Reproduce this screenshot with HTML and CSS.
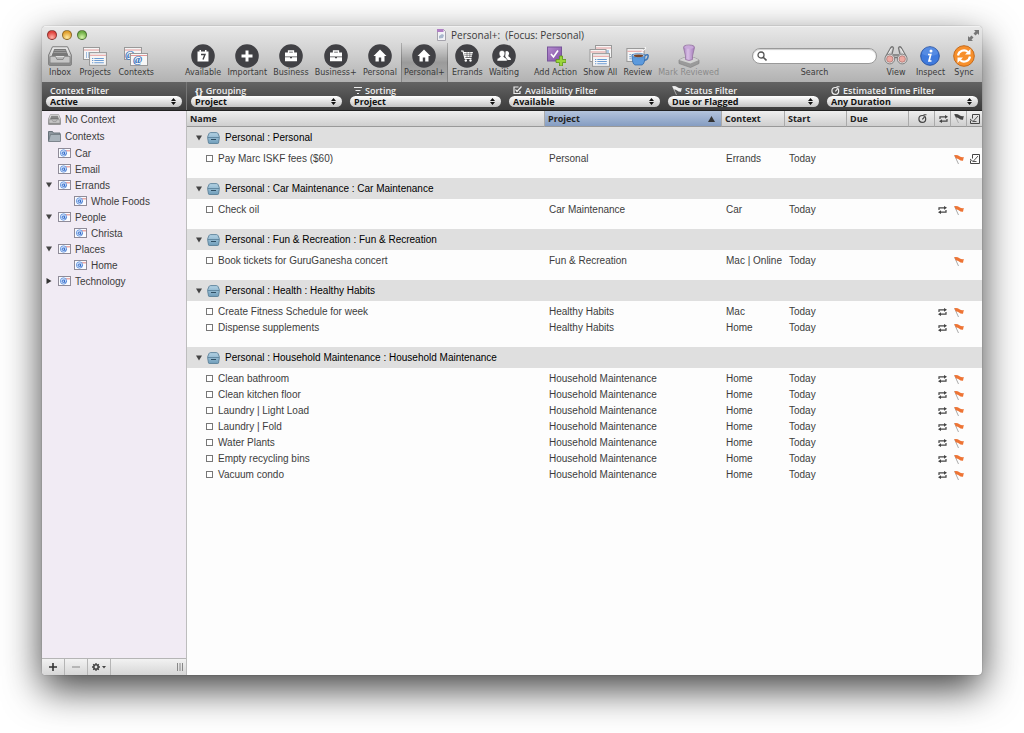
FILE: index.html
```html
<!DOCTYPE html>
<html lang="en">
<head>
    <meta charset="UTF-8">
    <meta name="viewport" content="width=device-width, initial-scale=1.0">
    <title>Personal+: (Focus: Personal)</title>
    <link rel="stylesheet" href="styles.css">
</head>
<body>

<!-- shared icons -->
<svg class="defs" aria-hidden="true">
    <defs>
        <linearGradient id="metal" x1="0" y1="0" x2="0" y2="1">
            <stop offset="0" stop-color="#f4f4f4"/><stop offset="1" stop-color="#8e8e8e"/>
        </linearGradient>
        <linearGradient id="blueBox" x1="0" y1="0" x2="0" y2="1">
            <stop offset="0" stop-color="#b4d3e5"/><stop offset="1" stop-color="#6f9dba"/>
        </linearGradient>
        <linearGradient id="purple" x1="0" y1="0" x2="1" y2="1">
            <stop offset="0" stop-color="#b58ccf"/><stop offset="1" stop-color="#7f4fa3"/>
        </linearGradient>
        <linearGradient id="stamp">
            <stop offset="0" stop-color="#a680bd"/><stop offset=".4" stop-color="#d9bfe6"/><stop offset="1" stop-color="#a27ab9"/>
        </linearGradient>
    </defs>
    <symbol id="tray" viewBox="0 0 24 20">
        <path d="M4.500 .8h15L23.300 9v9.500q0 .8-.8.8h-21q-.8 0-.8-.8V9z" fill="url(#metal)" stroke="#777"/>
        <path d="M6 2.500h12l3.300 8H2.700z" fill="#777" stroke="#eee" stroke-width=".8"/>
        <path d="M6.500 4.500h11M5.500 6.500h13" stroke="#999"/>
        <path d="M2 10.500h5.500l1.500 3h6l1.500-3H22V17H2z" fill="#c6c6c6" stroke="#777" stroke-width=".7"/>
        <path d="M2 17.800h20" stroke="#888"/>
    </symbol>
    <symbol id="card" viewBox="0 0 17 13">
        <rect x=".5" y=".5" width="16" height="12" fill="#f6f6f6" stroke="#999"/>
        <path d="M1 3h15" stroke="#e59a9a"/>
        <path d="M3 6h1M3 8h1M3 10h1" stroke="#4d83c4"/>
        <path d="M5 6h9M5 8h9M5 10h9" stroke="#6c9bd2"/>
    </symbol>
    <symbol id="at" viewBox="0 0 13 10">
        <rect x=".5" y=".5" width="12" height="9" fill="#fafbff" stroke="#8f8b98"/>
        <path d="M8 2h4v1.500H8z" fill="#e9aba8"/>
        <circle cx="5.500" cy="5" r="3.200" fill="#d5e4fa" stroke="#5c8fdc" stroke-width=".8"/>
        <circle cx="5.300" cy="5.200" r="1.200" fill="none" stroke="#2b66c8" stroke-width=".9"/>
        <path d="M6.800 3.500L6.400 6.300Q7.500 7 8.300 5.400" fill="none" stroke="#2b66c8" stroke-width=".8"/>
    </symbol>
    <symbol id="box" viewBox="0 0 13 12">
        <path d="M3.500 .6h6q1 0 1.500 1l1.300 3v1.600L11.500 11q-.2.500-.8.500H2.300q-.6 0-.8-.5L.7 6.200V4.600L2 1.600q.5-1 1.500-1z" fill="url(#blueBox)" stroke="#5a8098" stroke-width=".9"/>
        <path d="M1 5.500h11" stroke="#557c95" stroke-width=".8"/>
        <path d="M4 7.500h5" stroke="#2f4f64"/>
    </symbol>
    <symbol id="folder" viewBox="0 0 13 12">
        <path d="M.5 1.500h4l1 1.500h6.500v8H.5z" fill="#8d979f" stroke="#68727a"/>
        <path d="M2.500 4.500h10v7h-12z" fill="#a9b3bb" stroke="#68727a" stroke-width=".7"/>
    </symbol>
    <symbol id="repeat" viewBox="0 0 9 8">
        <path d="M1 4V1.800h6M8 4v2.200H2" fill="none" stroke="currentColor" stroke-width="1.200"/>
        <path d="M6 0l3 1.800-3 2zM3 4.200L0 6.200 3 8z" fill="currentColor"/>
    </symbol>
    <symbol id="flag" viewBox="0 0 10 9">
        <path d="M.5 .3L4.500 9" stroke="#aaa"/>
        <path d="M.3 .3Q3-.4 5.500 1.200 7.500 2.500 9.800 2L9 5.800Q6.500 6 5 4.600 3.800 3.500 2 3.600z" fill="currentColor"/>
    </symbol>
    <symbol id="note" viewBox="0 0 10 10">
        <path d="M2.500 .5h7v9h-9v-3M2.500 .5v4" fill="none" stroke="currentColor"/>
        <path d="M3.500 7L8 2M3 7.500h3.500M0 5l3 2.500" fill="none" stroke="currentColor" stroke-width=".9"/>
    </symbol>
    <symbol id="timer" viewBox="0 0 9 9">
        <circle cx="4.300" cy="4.900" r="3.400" fill="none" stroke="currentColor" stroke-width="1.200"/>
        <path d="M4.300 5.300L6.500 3M5.500 .8h3" fill="none" stroke="currentColor" stroke-width="1.100"/>
    </symbol>
    <symbol id="arrows" viewBox="0 0 5 7">
        <path d="M2.500 0L5 3H0zM0 4h5L2.500 7z" fill="#111"/>
    </symbol>
    <symbol id="down" viewBox="0 0 6 6"><path d="M0 .5h6L3 5.500z" fill="#444"/></symbol>
    <symbol id="right" viewBox="0 0 6 6"><path d="M.5 0v6L5.500 3z" fill="#333"/></symbol>
    <symbol id="house" viewBox="0 0 24 24">
        <circle cx="12" cy="12" r="11.800" fill="#414145"/>
        <path d="M12 5.500l6.500 6.500h-2v5.500h-3.300v-4h-2.400v4H7.500V12h-2z" fill="#fff"/>
    </symbol>
    <symbol id="case" viewBox="0 0 24 24">
        <circle cx="12" cy="12" r="11.800" fill="#414145"/>
        <path d="M9.500 9V7h5v2" fill="none" stroke="#fff" stroke-width="1.300"/>
        <path d="M6 8.500h12v4H6zM6 13.200h5v1h2v-1h5v4H6z" fill="#fff"/>
    </symbol>
</svg>

<main class="window">
    <header class="chrome">
        <div class="titlebar">
            <div class="lights">
                <button class="light red" aria-label="Close"></button>
                <button class="light yellow" aria-label="Minimize"></button>
                <button class="light green" aria-label="Zoom"></button>
            </div>
            <h1 class="title">
                <svg width="9" height="12" viewBox="0 0 9 12"><path d="M.5 .5h6l2 2v9h-8z" fill="#f3f3f7" stroke="#a5a3ad"/><path d="M0 0h6.500v3H0z" fill="#b07fc4"/><path d="M2 9.500V7l3-2 2 1-1 3z" fill="#a9b8cd"/></svg>
                Personal+:&nbsp; (Focus: Personal)
            </h1>
            <button class="fullscreen" aria-label="Full screen">
                <svg width="11" height="11" viewBox="0 0 11 11"><path d="M6 0h5v5L9.500 3.500 7.500 5.500 5.500 3.500 7.500 1.500zM0 6l1.500 1.500L3.500 5.500l2 2-2 2L5 11H0z" fill="#777"/></svg>
            </button>
        </div>

        <div class="toolbar">
            <div class="tools tools-side">
                <button class="tool"><svg width="24" height="20"><use href="#tray"/></svg>Inbox</button>
                <button class="tool">
                    <svg width="24" height="20" viewBox="0 0 24 20"><use href="#card" width="17" height="13" y="1"/><use href="#card" x="6" y="6" width="18" height="14"/></svg>Projects
                </button>
                <button class="tool">
                    <svg width="24" height="20" viewBox="0 0 24 20">
                        <rect x=".5" y="1.500" width="17" height="12" fill="#f4f4f4" stroke="#999"/><path d="M1 4h16" stroke="#e59a9a"/>
                        <text class="at-big" x="1" y="12">@</text>
                        <rect x="6.500" y="7.500" width="17" height="12" fill="#f7f7f7" stroke="#999"/><path d="M7 9.500h16" stroke="#e59a9a"/>
                        <text class="at-big" x="9" y="17">@</text>
                    </svg>Contexts
                </button>
            </div>

            <div class="tools tools-views">
                <button class="tool">
                    <svg width="24" height="24" viewBox="0 0 24 24"><circle cx="12" cy="12" r="11.800" fill="#414145"/><path d="M6.500 7.500h2V6h1.500v1.500h4V6h1.500v1.500h2v10h-11z" fill="#fff"/><path d="M10 10.500h4l-2 5" fill="none" stroke="#414145" stroke-width="1.400"/></svg>Available
                </button>
                <button class="tool">
                    <svg width="24" height="24" viewBox="0 0 24 24"><circle cx="12" cy="12" r="11.800" fill="#414145"/><path d="M12 6.500v11M6.500 12h11" stroke="#fff" stroke-width="3"/></svg>Important
                </button>
                <button class="tool"><svg width="24" height="24"><use href="#case"/></svg>Business</button>
                <button class="tool"><svg width="24" height="24"><use href="#case"/></svg>Business+</button>
                <button class="tool"><svg width="24" height="24"><use href="#house"/></svg>Personal</button>
                <button class="tool selected"><svg width="24" height="24"><use href="#house"/></svg>Personal+</button>
                <button class="tool">
                    <svg width="24" height="24" viewBox="0 0 24 24"><circle cx="12" cy="12" r="11.800" fill="#414145"/><path d="M6 7h2l2 7.500h6.500" fill="none" stroke="#fff" stroke-width="1.200"/><path d="M8.500 8h9.500l-1.500 5.200H10z" fill="#fff"/><path d="M9 9.700h9M9.500 11.400h8M12 8v5M14.800 8v5" stroke="#414145" stroke-width=".5"/><circle cx="10.800" cy="16.500" r="1.200" fill="#fff"/><circle cx="15.500" cy="16.500" r="1.200" fill="#fff"/></svg>Errands
                </button>
                <button class="tool">
                    <svg width="24" height="24" viewBox="0 0 24 24"><circle cx="12" cy="12" r="11.800" fill="#414145"/><path d="M13.500 7.500c1.500-1.500 4 0 3.500 2.500l-.7 1.800c0 1.400 2.700 1.200 2.700 4.200h-3.500l-2.300-3.500z" fill="#fff"/><path d="M5 17c0-4 3.300-2.800 3.300-4.500-2-2.500-1.300-6 1.700-6s3.700 3.500 1.700 6c0 1.700 3.500.5 3.500 4.500z" fill="#fff" stroke="#414145" stroke-width=".5"/></svg>Waiting
                </button>
            </div>

            <div class="tools tools-actions">
                <button class="tool">
                    <svg width="20" height="20" viewBox="0 0 20 20"><rect x="1.500" y="1" width="14" height="14" fill="url(#purple)" stroke="#77549a"/><path d="M5 8l2.500 3L12 4.500" fill="none" stroke="#fff" stroke-width="1.600"/><path d="M13.500 10v3.500H10v3h3.500V20h3v-3.500H20v-3h-3.500V10z" fill="#9bd53b" stroke="#5c9616" stroke-width=".8"/></svg>Add Action
                </button>
                <button class="tool">
                    <svg width="24" height="22" viewBox="0 0 24 22"><use href="#card" x="7" width="17" height="13"/><use href="#card" y="4" x="1" width="18" height="13"/><use href="#card" x="4" y="8" width="18" height="14"/></svg>Show All
                </button>
                <button class="tool">
                    <svg width="24" height="20" viewBox="0 0 24 20"><use href="#card" y="2" width="19" height="14"/><path d="M18 10q5-3 4 1t-5 3" fill="none" stroke="#3f77b8" stroke-width="1.500"/><path d="M6 9h13q0 9-3 10H9Q6 18 6 9z" fill="#5c9add" stroke="#2e66a5" stroke-width=".7"/><ellipse cx="12.500" cy="9.500" rx="6.300" ry="2.200" fill="#b9d4f0" stroke="#3f77b8" stroke-width=".6"/><ellipse cx="12.500" cy="9.800" rx="4.800" ry="1.400" fill="#7a4428"/><path d="M16 7q-1-2 2-3t1-3" fill="none" stroke="#fff"/></svg>Review
                </button>
                <button class="tool" disabled>
                    <svg width="22" height="24" viewBox="0 0 22 24"><path d="M1 16l5-2.500h10l5 2.500v3.500L12.500 23.500 1 19.500z" fill="#9a9a9a" stroke="#858585" stroke-width=".7"/><path d="M1 16l5-2.500h10l5 2.500-8.500 3.500z" fill="#d2d2d2"/><path d="M5.500 3.500Q5.500 1 11 1t5.500 2.500L14.500 12v3.500q-3.500 2-7 0V12z" fill="url(#stamp)" stroke="#94749f" stroke-width=".8"/><ellipse cx="11" cy="3.300" rx="4.500" ry="1.500" fill="#c9a9da"/></svg>Mark Reviewed
                </button>
            </div>

            <label class="search">
                <span class="search-box">
                    <svg width="10" height="10" viewBox="0 0 10 10"><circle cx="4" cy="4" r="3" fill="none" stroke="#555" stroke-width="1.300"/><path d="M6.200 6.200L9.500 9.500" stroke="#555" stroke-width="1.600"/></svg>
                    <input type="search">
                </span>
                Search
            </label>

            <div class="tools tools-right">
                <button class="tool">
                    <svg width="24" height="20" viewBox="0 0 24 20"><path d="M1.500 11L6.500 2q2-2.500 3 0L8 8M22.500 11L17.500 2q-2-2.500-3 0L16 8M9 9h6M10 11.500h4" fill="none" stroke="#777" stroke-width="1.300"/><path d="M3.500 9.500l4-7M20.500 9.500l-4-7" stroke="#eee"/><circle cx="5.800" cy="13" r="4.900" fill="#ddd" stroke="#777" stroke-width=".9"/><circle cx="18.200" cy="13" r="4.900" fill="#ddd" stroke="#777" stroke-width=".9"/><circle cx="5.800" cy="13" r="3.200" fill="#eda9a1" stroke="#a66f6c" stroke-width=".7"/><circle cx="18.200" cy="13" r="3.200" fill="#eda9a1" stroke="#a66f6c" stroke-width=".7"/></svg>View
                </button>
                <button class="tool">
                    <svg width="20" height="20" viewBox="0 0 20 20"><circle cx="10" cy="10" r="9.300" fill="#3f7add" stroke="#2c56a4"/><path d="M2 8a8 7 0 0 1 16 0q-8 4-16 0z" fill="#6b9be9" opacity=".5"/><circle cx="11" cy="5" r="1.500" fill="#fff"/><path d="M8 8.500h2.700L9 15h2.500" fill="none" stroke="#fff" stroke-width="1.700"/></svg>Inspect
                </button>
                <button class="tool">
                    <svg width="22" height="22" viewBox="0 0 22 22"><circle cx="11" cy="11" r="10.300" fill="#f78f2b" stroke="#c46a1c"/><path d="M5 10.500a6 6 0 0 1 10-3.500M17 11.500a6 6 0 0 1-10 3.500" fill="none" stroke="#fff" stroke-width="2.200"/><path d="M17.500 4v5.500H12zM4.500 18v-5.500H10z" fill="#fff"/></svg>Sync
                </button>
            </div>
        </div>
    </header>

    <section class="filters">
        <label class="filter">
            <span class="filter-name">Context Filter</span>
            <select><option>Active</option></select>
            <svg class="arrows" width="5" height="7"><use href="#arrows"/></svg>
        </label>
        <label class="filter">
            <span class="filter-name"><b>{}</b>Grouping</span>
            <select><option>Project</option></select>
            <svg class="arrows" width="5" height="7"><use href="#arrows"/></svg>
        </label>
        <label class="filter">
            <span class="filter-name"><svg width="8" height="8" viewBox="0 0 8 8"><path d="M0 1.500h8M1.500 4.500h5M3 7.500h2" stroke="#eee" stroke-width="1"/></svg>Sorting</span>
            <select><option>Project</option></select>
            <svg class="arrows" width="5" height="7"><use href="#arrows"/></svg>
        </label>
        <label class="filter">
            <span class="filter-name"><svg width="9" height="8" viewBox="0 0 9 8"><path d="M5.500 1H1v6.500h6V5M2.500 3.500L4 5.500 8.500 .5" fill="none" stroke="#eee" stroke-width="1.200"/></svg>Availability Filter</span>
            <select><option>Available</option></select>
            <svg class="arrows" width="5" height="7"><use href="#arrows"/></svg>
        </label>
        <label class="filter">
            <span class="filter-name"><svg width="10" height="9"><use href="#flag"/></svg>Status Filter</span>
            <select><option>Due or Flagged</option></select>
            <svg class="arrows" width="5" height="7"><use href="#arrows"/></svg>
        </label>
        <label class="filter">
            <span class="filter-name"><svg width="9" height="9"><use href="#timer"/></svg>Estimated Time Filter</span>
            <select><option>Any Duration</option></select>
            <svg class="arrows" width="5" height="7"><use href="#arrows"/></svg>
        </label>
    </section>

    <div class="content">
        <aside class="sidebar">
            <ul class="contexts">
                <li class="root"><svg width="13" height="11"><use href="#tray"/></svg>No Context</li>
                <li class="root"><svg width="13" height="12"><use href="#folder"/></svg>Contexts</li>
                <li class="child"><i></i><svg width="13" height="10"><use href="#at"/></svg>Car</li>
                <li class="child"><i></i><svg width="13" height="10"><use href="#at"/></svg>Email</li>
                <li class="child"><i><svg width="6" height="6"><use href="#down"/></svg></i><svg width="13" height="10"><use href="#at"/></svg>Errands</li>
                <li class="grandchild"><svg width="13" height="10"><use href="#at"/></svg>Whole Foods</li>
                <li class="child"><i><svg width="6" height="6"><use href="#down"/></svg></i><svg width="13" height="10"><use href="#at"/></svg>People</li>
                <li class="grandchild"><svg width="13" height="10"><use href="#at"/></svg>Christa</li>
                <li class="child"><i><svg width="6" height="6"><use href="#down"/></svg></i><svg width="13" height="10"><use href="#at"/></svg>Places</li>
                <li class="grandchild"><svg width="13" height="10"><use href="#at"/></svg>Home</li>
                <li class="child"><i><svg width="6" height="6"><use href="#right"/></svg></i><svg width="13" height="10"><use href="#at"/></svg>Technology</li>
            </ul>
            <footer class="side-footer">
                <button aria-label="Add"><svg width="8" height="8" viewBox="0 0 8 8"><path d="M4 0v8M0 4h8" stroke="#333" stroke-width="1.600"/></svg></button>
                <button aria-label="Remove"><svg width="8" height="8" viewBox="0 0 8 8"><path d="M0 4h8" stroke="#888" stroke-width="1.200"/></svg></button>
                <button aria-label="Actions"><svg width="14" height="8" viewBox="0 0 14 8"><circle cx="4" cy="4" r="2.200" fill="none" stroke="#444" stroke-width="1.600"/><path d="M4 0v1.500M4 6.500V8M0 4h1.500M6.500 4H8M1.200 1.200l1 1M5.800 5.800l1 1M6.800 1.200l-1 1M2.200 5.800l-1 1" stroke="#444" stroke-width="1.300"/><path d="M10 3h4l-2 2.500z" fill="#444"/></svg></button>
                <svg class="grip" width="6" height="8" viewBox="0 0 6 8"><path d="M.5 0v8M3 0v8M5.500 0v8" stroke="#888"/></svg>
            </footer>
        </aside>

        <section class="list">
            <table>
                <colgroup>
                    <col><col class="c-project"><col class="c-context"><col class="c-date"><col class="c-date">
                    <col class="c-time"><col class="c-icon"><col class="c-icon"><col class="c-icon">
                </colgroup>
                <thead>
                    <tr>
                        <th>Name</th>
                        <th class="sorted">Project <svg width="7" height="6" viewBox="0 0 7 6"><path d="M3.500 0L7 6H0z" fill="#333"/></svg></th>
                        <th>Context</th>
                        <th>Start</th>
                        <th>Due</th>
                        <th class="icon" aria-label="Duration"><svg width="9" height="9"><use href="#timer"/></svg></th>
                        <th class="icon" aria-label="Repeat"><svg width="9" height="8"><use href="#repeat"/></svg></th>
                        <th class="icon" aria-label="Flag"><svg width="10" height="9"><use href="#flag"/></svg></th>
                        <th class="icon" aria-label="Note"><svg width="10" height="10"><use href="#note"/></svg></th>
                    </tr>
                </thead>
            </table>
        </section>
    </div>
</main>

<script>
    // [name, project, context, repeats, has note]
    const groups = [
        { title: 'Personal : Personal', tasks: [
            ['Pay Marc ISKF fees ($60)', 'Personal', 'Errands', false, true]
        ]},
        { title: 'Personal : Car Maintenance : Car Maintenance', tasks: [
            ['Check oil', 'Car Maintenance', 'Car', true, false]
        ]},
        { title: 'Personal : Fun & Recreation : Fun & Recreation', tasks: [
            ['Book tickets for GuruGanesha concert', 'Fun & Recreation', 'Mac | Online', false, false]
        ]},
        { title: 'Personal : Health : Healthy Habits', tasks: [
            ['Create Fitness Schedule for week', 'Healthy Habits', 'Mac', true, false],
            ['Dispense supplements', 'Healthy Habits', 'Home', true, false]
        ]},
        { title: 'Personal : Household Maintenance : Household Maintenance', tasks: [
            ['Clean bathroom', 'Household Maintenance', 'Home', true, false],
            ['Clean kitchen floor', 'Household Maintenance', 'Home', true, false],
            ['Laundry | Light Load', 'Household Maintenance', 'Home', true, false],
            ['Laundry | Fold', 'Household Maintenance', 'Home', true, false],
            ['Water Plants', 'Household Maintenance', 'Home', true, false],
            ['Empty recycling bins', 'Household Maintenance', 'Home', true, false],
            ['Vacuum condo', 'Household Maintenance', 'Home', true, false]
        ]}
    ];

    const icon = (name, w, h) => `<svg width="${w}" height="${h}"><use href="#${name}"/></svg>`;
    const text = s => s.replace(/&/g, '&amp;');
    const table = document.querySelector('.list table');

    groups.forEach(group => {
        const body = document.createElement('tbody');
        body.innerHTML = `<tr class="group"><th colspan="9"><div>${icon('down', 6, 6)}${icon('box', 13, 12)}${text(group.title)}</div></th></tr>` +
            group.tasks.map(([name, project, context, repeats, note]) => `
                <tr class="task">
                    <td><label><input type="checkbox">${text(name)}</label></td>
                    <td>${text(project)}</td>
                    <td>${context}</td>
                    <td>Today</td>
                    <td></td>
                    <td></td>
                    <td class="icon">${repeats ? icon('repeat', 9, 8) : ''}</td>
                    <td class="icon flagged">${icon('flag', 10, 9)}</td>
                    <td class="icon">${note ? icon('note', 10, 10) : ''}</td>
                </tr>`).join('');
        table.appendChild(body);
    });
</script>

</body>
</html>
```
FILE: styles.css
```css
* {
    box-sizing: border-box;
}
body {
    margin: 0;
    padding: 26px 42px 58px;
    background: #fff;
    font-family: "Liberation Sans", Arial, sans-serif;
    font-size: 10px;
    color: #3c3c3c;
}
button {
    margin: 0;
    padding: 0;
    border: none;
    background: none;
    font: inherit;
    color: inherit;
}
svg {
    display: block;
    flex: none;
}
.defs {
    position: absolute;
    width: 0;
    height: 0;
}

/* window */
.window {
    display: flex;
    flex-direction: column;
    min-height: calc(100vh - 84px);
    border-radius: 4px;
    overflow: hidden;
    background: #fdfdfd;
    box-shadow: 0 0 1px rgba(0, 0, 0, 0.6), 0 14px 38px rgba(0, 0, 0, 0.75);
}
.chrome {
    background: linear-gradient(#e8e8e8, #cfcfcf 50%, #b2b2b2);
    border-top: 1px solid #f2f2f2;
    font-family: "DejaVu Sans", sans-serif;
}
.titlebar {
    display: grid;
    grid-template-columns: 1fr auto 1fr;
    align-items: center;
    height: 16px;
    padding: 0 3px 0 5px;
}
.lights {
    display: flex;
    gap: 5px;
}
.light {
    width: 10px;
    height: 10px;
    border-radius: 50%;
    border: 1px solid rgba(0, 0, 0, 0.4);
}
.red {
    background: radial-gradient(circle at 50% 80%, #ffb3a8, #e0443e 70%);
}
.yellow {
    background: radial-gradient(circle at 50% 80%, #ffe9a0, #e0a030 70%);
}
.green {
    background: radial-gradient(circle at 50% 80%, #d5f5a8, #6fae45 70%);
}
.title {
    display: flex;
    align-items: center;
    gap: 5px;
    margin: 0 5px 0 0;
    font-family: "Open Sans", sans-serif;
    font-size: 10px;
    font-weight: normal;
    color: #3a3a3a;
}
.fullscreen {
    justify-self: end;
}

/* toolbar */
.toolbar {
    display: flex;
    height: 39px;
    font-size: 8px;
    line-height: 10px;
    color: #3a3a3a;
}
.tools {
    display: flex;
    justify-content: space-between;
    flex: none;
}
.tools-side {
    width: 112px;
    margin-left: 3px;
}
.tools-views {
    width: 338px;
    margin-left: 26px;
}
.tools-actions {
    width: 191px;
    margin-left: 10px;
}
.tools-right {
    width: 91px;
    margin-right: 7px;
}
.tool {
    display: flex;
    flex-direction: column;
    align-items: center;
    padding: 0 3px 4px;
    white-space: nowrap;
}
.tools-views .tool {
    padding: 0 2px 4px;
}
.tools-right .tool {
    padding: 0 0 4px;
}
.tool svg {
    margin: auto;
}
.tool:disabled {
    color: #8a8a8a;
}
.tools-views .selected {
    background: linear-gradient(rgba(0, 0, 0, 0), rgba(0, 0, 0, 0.22) 50%, rgba(0, 0, 0, 0.05));
    border-left: 1px solid rgba(0, 0, 0, 0.2);
    border-right: 1px solid rgba(0, 0, 0, 0.2);
}
.at-big {
    font: italic bold 11px "Liberation Serif", serif;
    fill: #3a74bd;
}
.search {
    display: flex;
    flex: 1;
    flex-direction: column;
    align-items: center;
    justify-content: space-between;
    min-width: 0;
    margin: 0 7px 0 30px;
    padding: 5px 0 4px;
}
.search-box {
    display: flex;
    align-items: center;
    width: 100%;
    height: 16px;
    padding: 0 4px;
    border: 1px solid #999;
    border-radius: 8px;
    background: #fff;
    box-shadow: inset 0 1px 1px rgba(0, 0, 0, 0.2);
}
.search input {
    flex: 1;
    min-width: 0;
    height: 12px;
    padding: 0 4px;
    border: none;
    outline: none;
    background: none;
    font: inherit;
}

/* filter bar */
.filters {
    display: grid;
    grid-template-columns: 145px repeat(5, 1fr);
    height: 29px;
    background: linear-gradient(#636363, #3c3c3c);
    border-bottom: 1px solid #222;
    font-family: "Open Sans", sans-serif;
    font-size: 9px;
}
.filter {
    position: relative;
    display: flex;
    flex-direction: column;
    padding: 2px 4px 0;
}
.filter:first-child {
    border-right: 1px solid #777;
}
.filter-name {
    display: flex;
    align-items: center;
    gap: 3px;
    height: 12px;
    padding-left: 4px;
    font-weight: 600;
    color: #eee;
}
.filter select {
    appearance: none;
    height: 11px;
    padding: 0 4px;
    border: none;
    border-radius: 6px;
    background: linear-gradient(#fff, #c4c4c4);
    font: bold 9px/11px "Open Sans", sans-serif;
    color: #111;
}
.arrows {
    position: absolute;
    right: 10px;
    bottom: 5px;
}

/* sidebar */
.content {
    display: flex;
    flex: 1;
}
.sidebar {
    display: flex;
    flex-direction: column;
    flex: none;
    width: 145px;
    border-right: 1px solid #bdbdbd;
    background: #f1ebf4;
}
.contexts {
    flex: 1;
    margin: 0;
    padding: 0;
    list-style: none;
}
.contexts li {
    display: flex;
    align-items: center;
    gap: 4px;
    height: 16px;
    padding-left: 6px;
}
.contexts .root {
    margin-bottom: 1px;
}
.contexts .child {
    padding-left: 4px;
}
.contexts .grandchild {
    padding-left: 32px;
}
.contexts i {
    width: 8px;
}
.side-footer {
    display: flex;
    height: 17px;
    border-top: 1px solid #b5b5b5;
    background: linear-gradient(#f2f2f2, #d6d6d6);
}
.side-footer button {
    display: flex;
    align-items: center;
    justify-content: center;
    width: 23px;
    border-right: 1px solid #b5b5b5;
}
.grip {
    margin: 4px 3px 0 auto;
}

/* task list */
.list {
    flex: 1;
    min-width: 0;
}
table {
    width: 100%;
    table-layout: fixed;
    border-collapse: separate;
    border-spacing: 0;
}
.c-project {
    width: 177px;
}
.c-context {
    width: 63px;
}
.c-date {
    width: 62px;
}
.c-time {
    width: 26px;
}
.c-icon {
    width: 16px;
}
th, td {
    padding: 0 0 0 5px;
    text-align: left;
    white-space: nowrap;
    line-height: 16px;
}
thead th {
    height: 16px;
    padding-left: 3px;
    border-bottom: 1px solid #999;
    border-left: 1px solid #aaa;
    background: linear-gradient(#efefef, #cfcfcf);
    font: bold 9px/15px "Open Sans", sans-serif;
    color: #222;
}
thead th:first-child {
    border-left: none;
}
thead .sorted {
    background: linear-gradient(#b4c4dc, #859dc2);
}
.sorted svg {
    float: right;
    margin: 5px 6px 0 0;
}
.icon, thead .icon {
    padding: 0 0 0 1px;
    color: #444;
}
.icon svg {
    margin: 0 auto;
}
.group th {
    height: 21px;
    background: #dfdfdf;
    font-weight: normal;
    color: #000;
}
.group div {
    display: flex;
    align-items: center;
    gap: 5px;
    padding-left: 4px;
}
.group + .task td {
    padding-top: 3px;
}
.task:last-child td {
    padding-bottom: 11px;
}
.task label {
    display: flex;
    align-items: center;
    gap: 5px;
    height: 16px;
    padding-left: 14px;
}
.task input {
    appearance: none;
    width: 7px;
    height: 7px;
    margin: 0 0 2px;
    border: 1px solid #777;
    background: #fff;
}
.task input:checked {
    background: #777;
}
.task .flagged {
    color: #ee7434;
}
```
